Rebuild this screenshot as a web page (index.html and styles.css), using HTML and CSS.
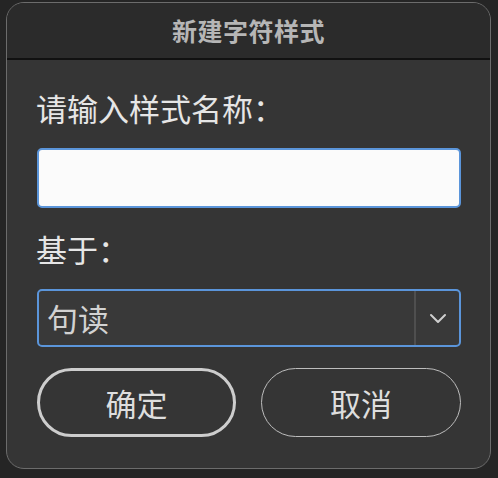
FILE: index.html
```html
<!DOCTYPE html>
<html lang="zh-CN">
<head>
<meta charset="utf-8">
<title>新建字符样式</title>
<link rel="stylesheet" href="styles.css">
</head>
<body>
<div class="dialog">
  <div class="titlebar">新建字符样式</div>
  <div class="content">
    <div class="label">请输入样式名称：</div>
    <div class="input"></div>
    <div class="label second">基于：</div>
    <div class="select">
      <span class="select-value">句读</span>
      <span class="select-arrow">
        <svg width="18" height="11" viewBox="0 0 18 11"><path d="M2 2 L9 9 L16 2" fill="none" stroke="#cfcfcf" stroke-width="2" stroke-linecap="round" stroke-linejoin="round"/></svg>
      </span>
    </div>
    <div class="buttons">
      <div class="btn primary">确定</div>
      <div class="btn">取消</div>
    </div>
  </div>
</div>
</body>
</html>
```

FILE: styles.css
```css
html, body {
  margin: 0;
  padding: 0;
}
body {
  width: 498px;
  height: 478px;
  background: #252525;
  overflow: hidden;
  font-family: "Noto Sans CJK SC", "Noto Sans", sans-serif;
}
.dialog {
  margin: 2px 0 0 6px;
  width: 485px;
  height: 467px;
  box-sizing: border-box;
  border: 1px solid #6c6c6c;
  border-radius: 18px;
  background: #353535;
  overflow: hidden;
  display: flex;
  flex-direction: column;
}
.titlebar {
  height: 55px;
  background: #2b2b2b;
  border-bottom: 2px solid #111;
  color: #b6b6b6;
  font-weight: bold;
  font-size: 25px;
  line-height: 54px;
  text-align: center;
  letter-spacing: 0.5px;
}
.content {
  flex: 1;
  padding: 28px 29px 0 30px;
  display: flex;
  flex-direction: column;
}
.label {
  font-size: 31px;
  line-height: 40px;
  color: #e6e6e6;
  height: 40px;
  margin-left: -1px;
}
.label.second {
  margin-top: 21px;
}
.input {
  margin-top: 20px;
  height: 60px;
  box-sizing: border-box;
  border: 2px solid #5b95da;
  border-radius: 5px;
  background: #fbfbfb;
}
.select {
  margin-top: 20px;
  height: 58px;
  box-sizing: border-box;
  border: 2px solid #5b95da;
  border-radius: 5px;
  background: #393939;
  display: flex;
  align-items: stretch;
}
.select-value {
  flex: 1;
  padding-left: 8px;
  font-size: 31px;
  line-height: 54px;
  color: #d2d2d2;
}
.select-arrow {
  width: 45px;
  box-sizing: border-box;
  border-left: 2px solid #4f4f4f;
  display: flex;
  align-items: center;
  justify-content: center;
}
.buttons {
  margin-top: 21px;
  display: flex;
  gap: 25px;
}
.btn {
  width: 200px;
  height: 69px;
  box-sizing: border-box;
  border: 1.5px solid #bdbdbd;
  border-radius: 35px;
  display: flex;
  align-items: center;
  justify-content: center;
  font-size: 31px;
  color: #dedede;
}
.btn.primary {
  width: 199px;
  border: 3.5px solid #cdcdcd;
}
```
